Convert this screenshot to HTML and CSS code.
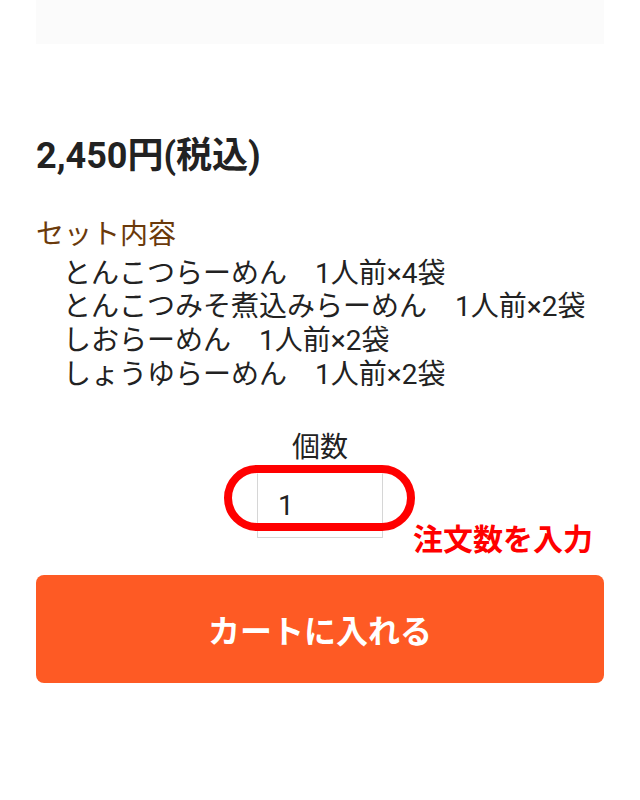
FILE: index.html
```html
<!DOCTYPE html>
<html lang="ja">

<head>
    <meta charset="UTF-8">
    <meta name="viewport" content="width=device-width, initial-scale=1.0">
    <title>とんこつらーめんセット</title>
    <link rel="stylesheet" href="styles.css">
</head>

<body>
    <main class="item">
        <!-- product photo area -->
        <div class="item-photo"></div>

        <p class="price">2,450円(税込)</p>

        <h2 class="set-title">セット内容</h2>
        <ul class="set-list">
            <li>とんこつらーめん　1人前×4袋</li>
            <li>とんこつみそ煮込みらーめん　1人前×2袋</li>
            <li>しおらーめん　1人前×2袋</li>
            <li>しょうゆらーめん　1人前×2袋</li>
        </ul>

        <form class="order">
            <label class="qty-label" for="qty">個数</label>
            <div class="qty-box">
                <input type="text" id="qty" value="1">
                <!-- annotation -->
                <span class="ring"></span>
                <span class="note">注文数を入力</span>
            </div>
            <button type="button" class="cart-btn">カートに入れる</button>
        </form>
    </main>
</body>

</html>
```

FILE: styles.css
```css
body {
    margin: 0;
    padding: 0;
    background-color: #fff;
    color: #222;
    font-family: Roboto, "Noto Sans CJK JP", sans-serif;
}

.item {
    padding: 0 36px;
}

.item-photo {
    height: 44px;
    background-color: #fbfbfb;
}

.price {
    margin: 91px 0 0;
    font-size: 36px;
    font-weight: bold;
    line-height: 1.2;
}

.set-title {
    margin: 40px 0 0;
    font-size: 28px;
    font-weight: normal;
    line-height: 1.2;
    color: #6b3a0b;
}

.set-list {
    list-style: none;
    margin: 5px 0 0;
    padding: 0 0 0 27px;
    font-size: 28px;
    line-height: 1.2;
}

/* quantity + cart */
.order {
    margin-top: 40px;
    display: flex;
    flex-direction: column;
    align-items: center;
}

.qty-label {
    font-size: 28px;
    line-height: 1.2;
}

.qty-box {
    position: relative;
    margin-top: 8px;
}

.qty-box input {
    box-sizing: border-box;
    width: 126px;
    height: 65px;
    padding: 0 0 0 20px;
    border: 1px solid #d6d6d6;
    border-top-color: #fff;
    font-family: inherit;
    font-size: 28px;
    color: #222;
    background: #fff;
}

.ring {
    position: absolute;
    top: -8px;
    bottom: 7px;
    left: -33px;
    right: -32px;
    border: 8px solid #ff0000;
    border-radius: 40px;
}

.note {
    position: absolute;
    top: 49px;
    left: calc(100% + 30px);
    white-space: nowrap;
    font-size: 30px;
    font-weight: bold;
    line-height: 1.2;
    color: #ff0000;
}

.cart-btn {
    align-self: stretch;
    margin-top: 37px;
    height: 108px;
    border: none;
    border-radius: 8px;
    background-color: #fe5a24;
    color: #fff;
    font-family: inherit;
    font-size: 32px;
    font-weight: bold;
}
```
